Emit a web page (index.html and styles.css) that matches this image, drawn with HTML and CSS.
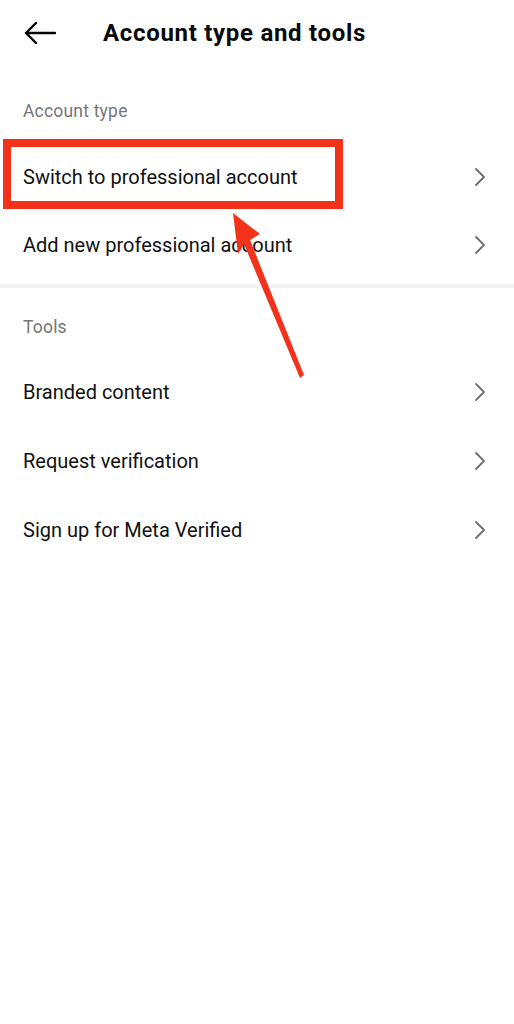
FILE: index.html
```html
<!DOCTYPE html>
<html>
<head>
<meta charset="utf-8">
<link rel="stylesheet" href="styles.css">
</head>
<body>
<div class="page">
  <header class="header">
    <svg class="back" width="32" height="22" viewBox="0 0 32 22"><path d="M31 11H2M12 1L2 11l10 10" fill="none" stroke="#000" stroke-width="2.4" stroke-linecap="round" stroke-linejoin="round"/></svg>
    <h1 class="title">Account type and tools</h1>
  </header>
  <section>
    <div class="label label-first">Account type</div>
    <div class="row highlighted">
      <span class="row-text">Switch to professional account</span>
      <svg class="chev" width="14" height="20" viewBox="0 0 14 20"><path d="M3 2l8 8-8 8" fill="none" stroke="#6e6e6e" stroke-width="1.8" stroke-linecap="round" stroke-linejoin="round"/></svg>
      <div class="redbox"></div>
    </div>
    <div class="row">
      <span class="row-text">Add new professional account</span>
      <svg class="chev" width="14" height="20" viewBox="0 0 14 20"><path d="M3 2l8 8-8 8" fill="none" stroke="#6e6e6e" stroke-width="1.8" stroke-linecap="round" stroke-linejoin="round"/></svg>
    </div>
  </section>
  <div class="divider"></div>
  <section class="tools">
    <div class="label label-tools">Tools</div>
    <div class="row">
      <span class="row-text">Branded content</span>
      <svg class="chev" width="14" height="20" viewBox="0 0 14 20"><path d="M3 2l8 8-8 8" fill="none" stroke="#6e6e6e" stroke-width="1.8" stroke-linecap="round" stroke-linejoin="round"/></svg>
    </div>
    <div class="row">
      <span class="row-text">Request verification</span>
      <svg class="chev" width="14" height="20" viewBox="0 0 14 20"><path d="M3 2l8 8-8 8" fill="none" stroke="#6e6e6e" stroke-width="1.8" stroke-linecap="round" stroke-linejoin="round"/></svg>
    </div>
    <div class="row">
      <span class="row-text">Sign up for Meta Verified</span>
      <svg class="chev" width="14" height="20" viewBox="0 0 14 20"><path d="M3 2l8 8-8 8" fill="none" stroke="#6e6e6e" stroke-width="1.8" stroke-linecap="round" stroke-linejoin="round"/></svg>
    </div>
  </section>
  <svg class="annot-arrow" width="514" height="400" viewBox="0 0 514 400">
    <polygon points="233,213 260,234 250,240 304,375 300,378 244,244 238,254" fill="#f2321b"/>
  </svg>
</div>
</body>
</html>
```
FILE: styles.css
```css
html, body {
  margin: 0;
  padding: 0;
  background: #fff;
}
.page {
  position: relative;
  width: 514px;
  min-height: 1024px;
  font-family: Roboto, "Liberation Sans", sans-serif;
  color: #111;
}
.header {
  height: 66px;
  display: flex;
  align-items: center;
  padding-left: 24px;
}
.back {
  display: block;
}
.title {
  margin: 0 0 0 47px;
  font-size: 24px;
  letter-spacing: 0.7px;
  font-weight: 700;
  color: #0a0a0a;
}
.label {
  font-size: 17.5px;
  letter-spacing: 0.2px;
  line-height: 20px;
  color: #767676;
  padding-left: 23px;
}
.label-first {
  padding-top: 35px;
  padding-bottom: 22px;
}
.label-tools {
  padding-top: 29px;
  padding-bottom: 20px;
}
.row {
  position: relative;
  height: 68px;
  display: flex;
  align-items: center;
  justify-content: space-between;
  padding: 0 27px 0 23px;
}
.tools .row {
  height: 69px;
}
.row-text {
  font-size: 20px;
  color: #111;
}
.chev {
  display: block;
}
.divider {
  margin-top: 5px;
  height: 4px;
  background: #f3f3f3;
}
.redbox {
  position: absolute;
  left: 3px;
  top: -4px;
  width: 324px;
  height: 54px;
  border: 8px solid #f2321b;
}
.annot-arrow {
  position: absolute;
  left: 0;
  top: 0;
}
```
